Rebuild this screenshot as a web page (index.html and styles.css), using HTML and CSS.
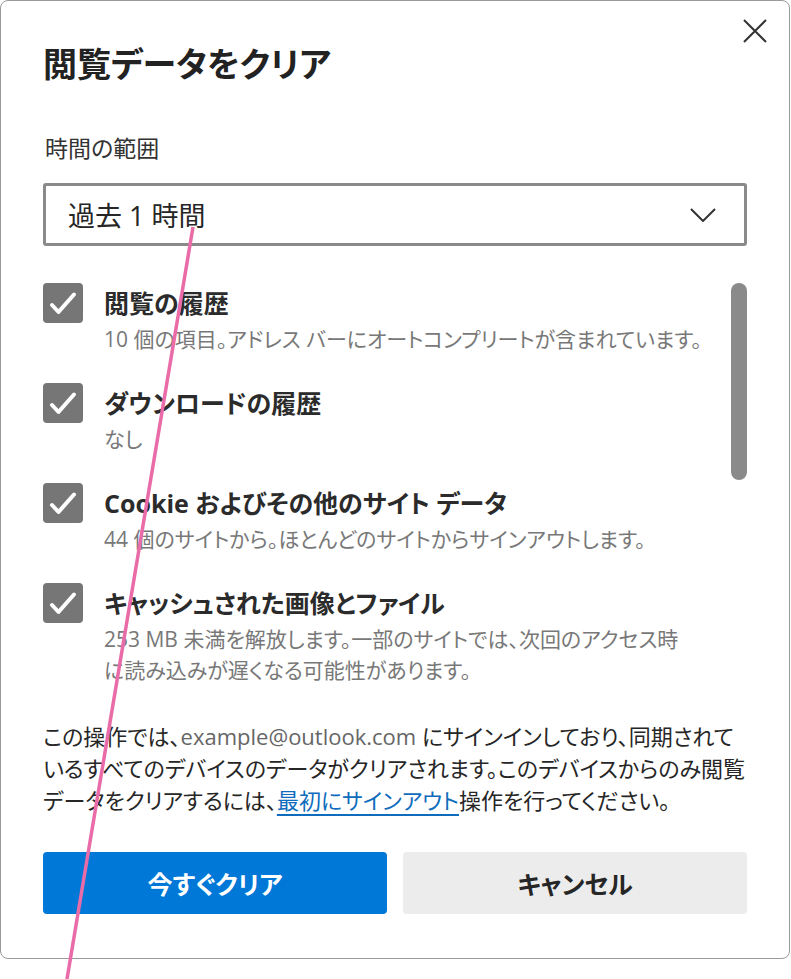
FILE: index.html
```html
<!DOCTYPE html>
<html lang="ja">
<head>
<meta charset="utf-8">
<title>閲覧データをクリア</title>
<link rel="stylesheet" href="styles.css">
</head>
<body>
<div class="dialog">
  <div class="header">
    <h1 class="title">閲覧データをクリア</h1>
    <button class="close" aria-label="閉じる">
      <svg width="24" height="24" viewBox="0 0 24 24"><path d="M1 1 L23 23 M23 1 L1 23" stroke="#333" stroke-width="2" fill="none"/></svg>
    </button>
  </div>
  <div class="field-label">時間の範囲</div>
  <div class="select">
    <span class="select-value">過去 1 時間</span>
    <svg class="chevron" width="26" height="14" viewBox="0 0 26 14"><path d="M1 1 L13 13 L25 1" stroke="#333" stroke-width="2" fill="none"/></svg>
  </div>
  <div class="list">
    <div class="items">
      <div class="item">
        <span class="checkbox"><svg width="40" height="40" viewBox="0 0 40 40"><path d="M9 22 L15.5 29 L31 11.5" stroke="#fff" stroke-width="4" fill="none" stroke-linecap="round" stroke-linejoin="round"/></svg></span>
        <div class="item-text">
          <div class="item-label">閲覧の履歴</div>
          <div class="item-desc">10 個の項目。アドレス バーにオートコンプリートが含まれています。</div>
        </div>
      </div>
      <div class="item">
        <span class="checkbox"><svg width="40" height="40" viewBox="0 0 40 40"><path d="M9 22 L15.5 29 L31 11.5" stroke="#fff" stroke-width="4" fill="none" stroke-linecap="round" stroke-linejoin="round"/></svg></span>
        <div class="item-text">
          <div class="item-label">ダウンロードの履歴</div>
          <div class="item-desc">なし</div>
        </div>
      </div>
      <div class="item">
        <span class="checkbox"><svg width="40" height="40" viewBox="0 0 40 40"><path d="M9 22 L15.5 29 L31 11.5" stroke="#fff" stroke-width="4" fill="none" stroke-linecap="round" stroke-linejoin="round"/></svg></span>
        <div class="item-text">
          <div class="item-label">Cookie およびその他のサイト データ</div>
          <div class="item-desc">44 個のサイトから。ほとんどのサイトからサインアウトします。</div>
        </div>
      </div>
      <div class="item">
        <span class="checkbox"><svg width="40" height="40" viewBox="0 0 40 40"><path d="M9 22 L15.5 29 L31 11.5" stroke="#fff" stroke-width="4" fill="none" stroke-linecap="round" stroke-linejoin="round"/></svg></span>
        <div class="item-text">
          <div class="item-label">キャッシュされた画像とファイル</div>
          <div class="item-desc">253 MB 未満を解放します。一部のサイトでは、次回のアクセス時<br>に読み込みが遅くなる可能性があります。</div>
        </div>
      </div>
    </div>
    <div class="scrollbar"><div class="thumb"></div></div>
  </div>
  <p class="note">この操作では、<span class="email">example@outlook.com</span> にサインインしており、同期されて<br>いるすべてのデバイスのデータがクリアされます。このデバイスからのみ閲覧データをクリアするには、<a class="link" href="#">最初にサインアウト</a>操作を行ってください。</p>
  <div class="actions">
    <button class="btn btn-primary">今すぐクリア</button>
    <button class="btn btn-secondary">キャンセル</button>
  </div>
</div>
<svg class="annotation" width="791" height="979" viewBox="0 0 791 979"><line x1="193" y1="227" x2="66" y2="985" stroke="#e96ba8" stroke-width="3.5"/></svg>
</body>
</html>
```

FILE: styles.css
```css
* { box-sizing: border-box; }
html, body { margin: 0; padding: 0; background: #fff; }
body {
  font-family: "Open Sans", "Noto Sans CJK JP", sans-serif;
  font-feature-settings: "palt";
  color: #262626;
  width: 791px;
  height: 979px;
  overflow: hidden;
}
.dialog {
  width: 790px;
  height: 959px;
  border: 1px solid #9a9a9a;
  border-radius: 8px;
  padding: 18px 42px 0 42px;
}
.header {
  display: flex;
  justify-content: space-between;
  align-items: flex-start;
}
.title {
  margin: 21px 0 0 0;
  font-size: 34px;
  line-height: 48px;
  font-weight: 700;
  color: #222;
}
.close {
  width: 24px;
  height: 24px;
  padding: 0;
  margin: 0 -20px 0 0;
  border: 0;
  background: none;
  display: block;
}
.close svg { display: block; }
.field-label {
  margin-top: 45px;
  margin-left: 2px;
  font-size: 23px;
  line-height: 30px;
  color: #333;
}
.select {
  margin-top: 20px;
  height: 63px;
  border: 3px solid #8a8a8a;
  border-radius: 3px;
  display: flex;
  align-items: center;
  justify-content: space-between;
  padding: 0 28px 0 22px;
}
.select-value {
  font-size: 27px;
  color: #262626;
}
.chevron { display: block; }
.list {
  margin-top: 37px;
  display: flex;
  align-items: flex-start;
}
.items {
  flex: 1;
  display: flex;
  flex-direction: column;
  gap: 28px;
}
.item {
  display: flex;
  gap: 21px;
  align-items: flex-start;
}
.checkbox {
  flex: none;
  width: 40px;
  height: 40px;
  background: #767676;
  border-radius: 4px;
  display: block;
}
.checkbox svg { display: block; }
.item-label {
  font-size: 25px;
  line-height: 40px;
  font-weight: 700;
  color: #2b2b2b;
}
.item-desc {
  margin-top: 1px;
  font-size: 21px;
  line-height: 31px;
  color: #787878;
}
.scrollbar {
  flex: none;
  width: 16px;
}
.thumb {
  height: 197px;
  background: #8a8a8a;
  border-radius: 8px;
}
.note {
  margin: 34px 0 0 0;
  font-size: 22px;
  line-height: 32px;
  color: #262626;
}
.email { color: #666; }
.link {
  color: #0f6cbd;
  text-decoration: underline;
  text-decoration-thickness: 2px;
  text-underline-offset: 5px;
}
.actions {
  margin-top: 36px;
  display: flex;
  gap: 16px;
}
.btn {
  flex: 1;
  height: 62px;
  border: 0;
  border-radius: 4px;
  font-family: "Open Sans", "Noto Sans CJK JP", sans-serif;
  font-feature-settings: "palt";
  font-size: 25px;
  font-weight: 700;
}
.btn-primary { background: #0078d7; color: #fff; }
.btn-secondary { background: #ececec; color: #262626; }
.annotation {
  position: absolute;
  left: 0;
  top: 0;
  pointer-events: none;
}
```
